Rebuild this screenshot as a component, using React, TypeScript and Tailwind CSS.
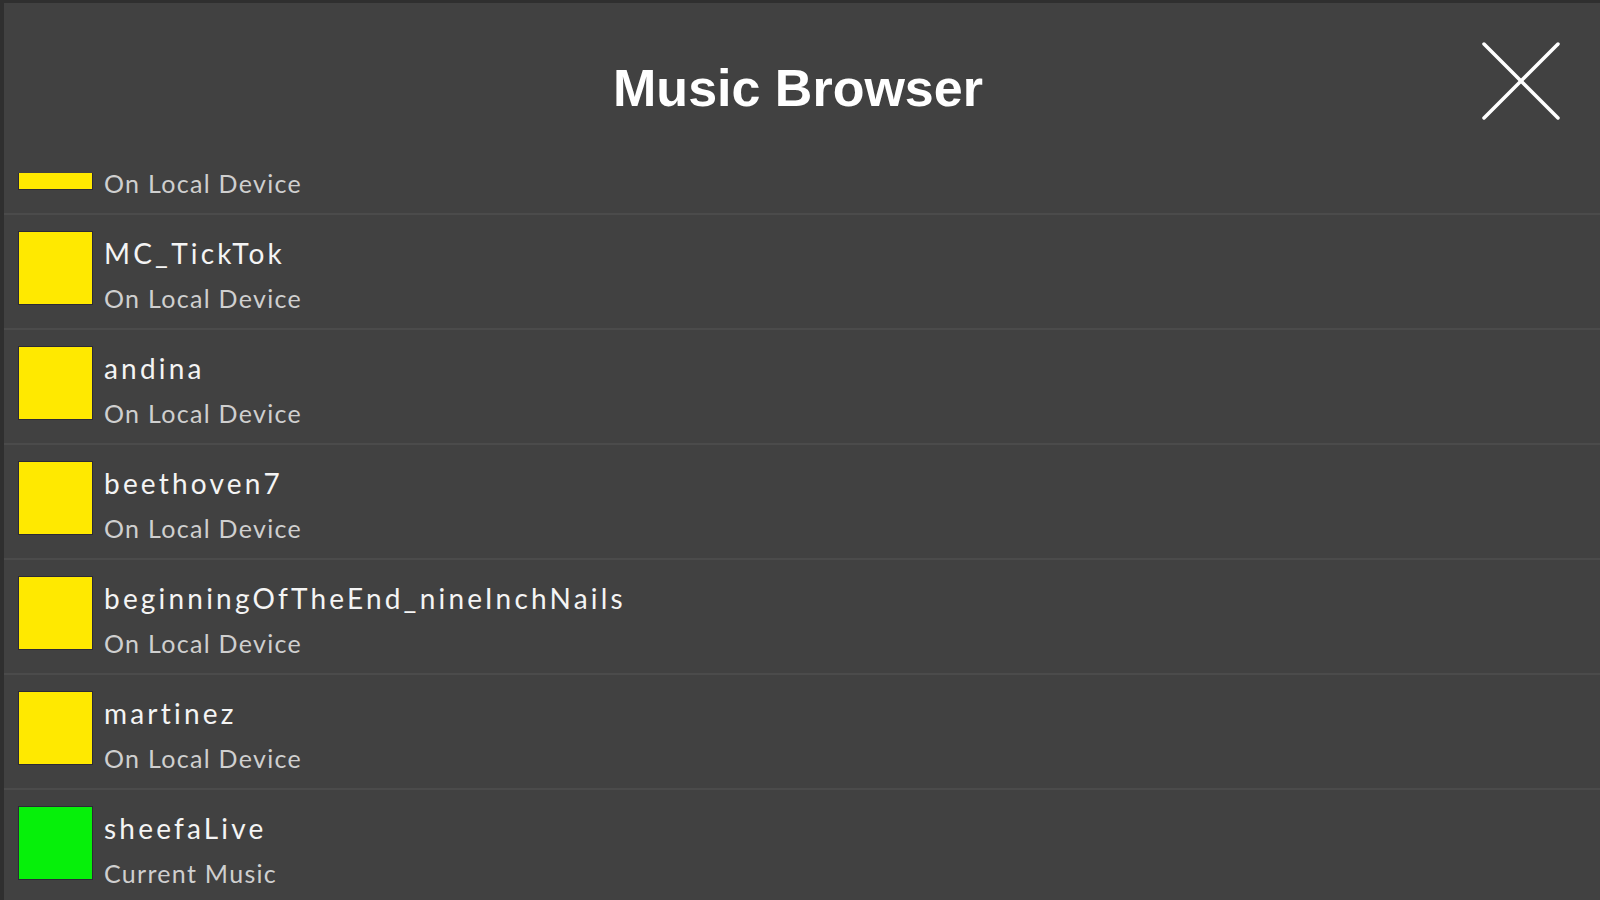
type Track = {
  name: string;
  location: string;
  current?: boolean;
};

const tracks: Track[] = [
  { name: "maple_leaf_rag", location: "On Local Device" },
  { name: "MC_TickTok", location: "On Local Device" },
  { name: "andina", location: "On Local Device" },
  { name: "beethoven7", location: "On Local Device" },
  { name: "beginningOfTheEnd_nineInchNails", location: "On Local Device" },
  { name: "martinez", location: "On Local Device" },
  { name: "sheefaLive", location: "Current Music", current: true },
];

function TrackRow({ track }: { track: Track }) {
  return (
    <li className="flex items-start border-b-2 border-[#4b4b4b] pl-[15px] pt-[17px] pb-[24px]">
      <div
        className={
          track.current
            ? "h-[72px] w-[73px] shrink-0 bg-[#06f00a] outline outline-1 outline-[#2c2a36]"
            : "h-[72px] w-[73px] shrink-0 bg-[#ffe900] outline outline-1 outline-[#2c2a36]"
        }
      />
      <div className="ml-[12px] flex h-[72px] flex-col [font-family:Lato,'Noto_Sans',sans-serif]">
        <span className="mt-[4px] text-[28px] leading-[34px] tracking-[3.2px] text-[#f4f4f4]">
          {track.name}
        </span>
        <span className="mt-[13px] text-[25px] leading-[30px] tracking-[1.3px] text-[#cfcfcf]">
          {track.location}
        </span>
      </div>
    </li>
  );
}

export default function App() {
  return (
    <div className="flex h-[900px] w-[1600px] flex-col overflow-hidden border-t-[3px] border-l-4 border-[#2f2f2f] bg-[#414141]">
      <header className="relative flex h-[170px] shrink-0 items-start justify-center pr-[8px]">
        <h1 className="mt-[55px] text-[52px] font-bold leading-[60px] text-white [font-family:'Liberation_Sans',Arial,sans-serif]">
          Music Browser
        </h1>
        <button
          type="button"
          aria-label="Close"
          className="absolute top-[39px] right-[40px] text-white"
        >
          <svg width="78" height="78" viewBox="0 0 78 78" fill="none" stroke="currentColor" strokeWidth="3.5" strokeLinecap="round">
            <line x1="2" y1="2" x2="76" y2="76" />
            <line x1="76" y1="2" x2="2" y2="76" />
          </svg>
        </button>
      </header>
      <div className="flex-1 overflow-hidden">
        <ul className="-mt-[73px]">
          {tracks.map((t) => (
            <TrackRow key={t.name} track={t} />
          ))}
        </ul>
      </div>
    </div>
  );
}
